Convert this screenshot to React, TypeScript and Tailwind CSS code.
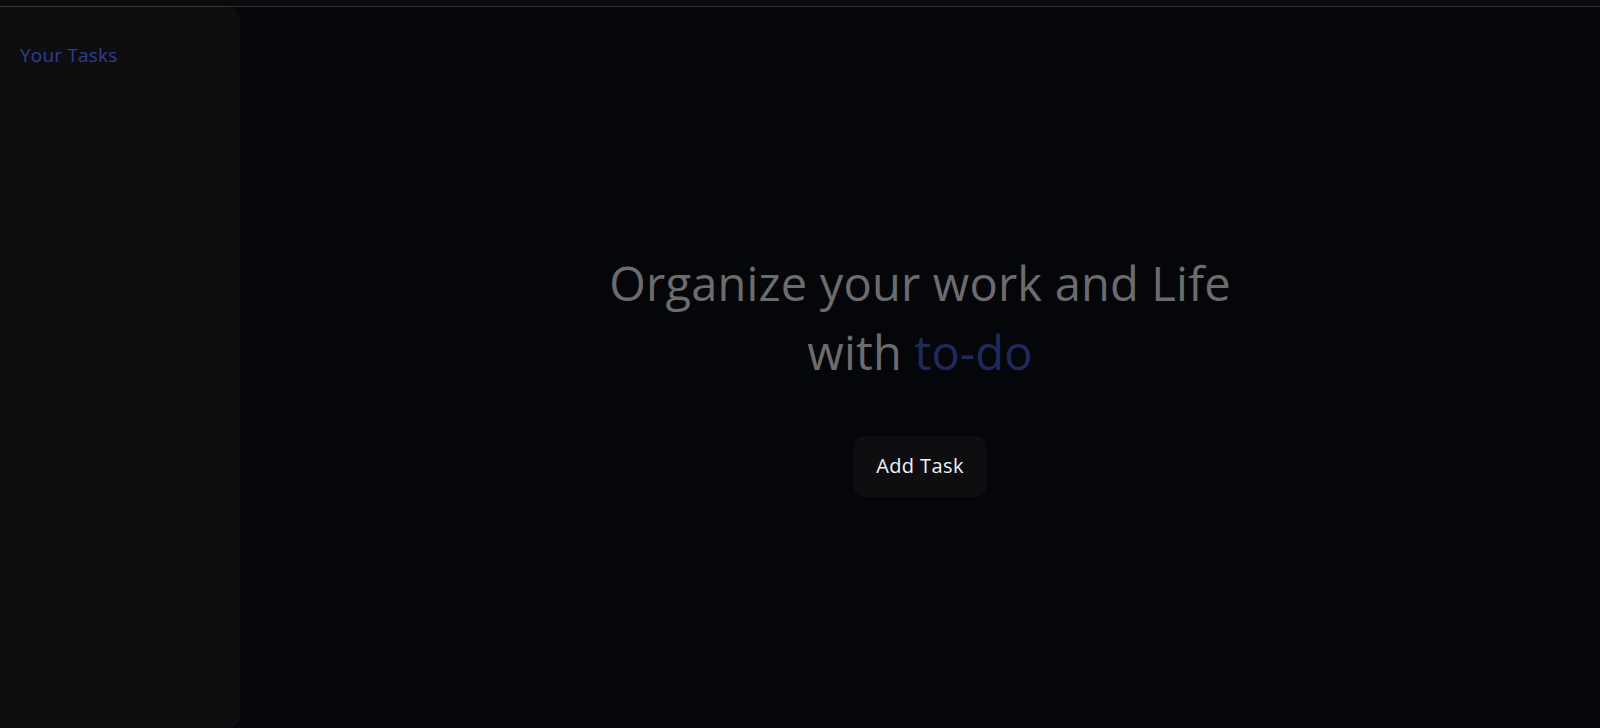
import React from 'react';

export default function App() {
  return (
    <div className="h-[728px] w-full overflow-hidden bg-[#05060a] flex flex-col" style={{ fontFamily: '"Open Sans", "Noto Sans", sans-serif' }}>
      <div className="h-[6px] bg-[#0b0b0c] shrink-0" />
      <div className="h-px bg-[#353535] shrink-0" />
      <div className="flex flex-1 min-h-0">
        <aside className="w-[240px] shrink-0 bg-[#0e0e10] rounded-r-xl px-5 pt-[36px]">
          <h2 className="text-[19px] text-[#2f3c9c] leading-6 tracking-[0.2px]">Your Tasks</h2>
        </aside>
        <main className="flex-1 flex flex-col items-center justify-center pt-[10px]">
          <h1 className="text-[47px] leading-[69px] font-medium text-[#6c6c6c] text-center tracking-[0.2px]">
            Organize your work and Life
            <br />
            with <span className="text-[#1f2a5c]">to-do</span>
          </h1>
          <button className="mt-[49px] h-[61px] w-[132px] rounded-[10px] bg-[#0e0e10] text-[#f1f3f8] text-[20px] font-medium tracking-[0.4px]">
            Add Task
          </button>
        </main>
      </div>
    </div>
  );
}
